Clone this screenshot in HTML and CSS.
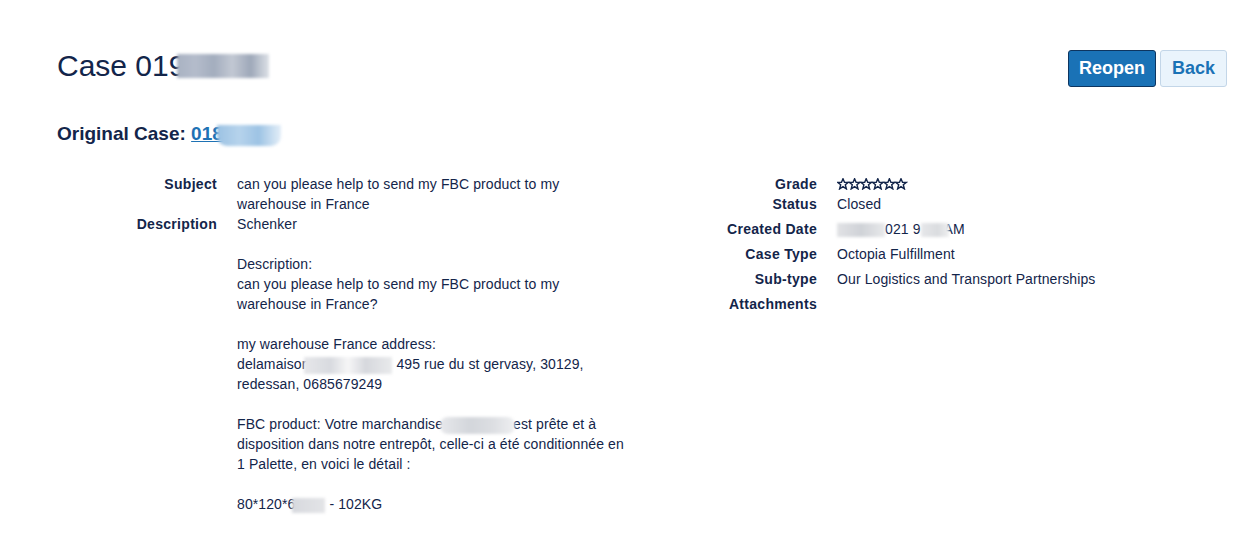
FILE: index.html
```html
<!DOCTYPE html>
<html lang="en">
<head>
    <meta charset="UTF-8">
    <meta name="viewport" content="width=device-width, initial-scale=1.0">
    <title>Case Detail</title>
    <link rel="stylesheet" href="styles.css">
</head>
<body>
    <div class="page">
        <div class="header">
            <h1>Case 019<span class="blur blur-title"></span></h1>
            <div class="actions">
                <button class="btn btn-primary">Reopen</button>
                <button class="btn btn-secondary">Back</button>
            </div>
        </div>

        <h2>Original Case: <a href="#">018<span class="blur blur-link"></span></a></h2>

        <div class="details">
            <div class="section">
                <div class="row">
                    <div class="label">Subject</div>
                    <div class="value">can you please help to send my FBC product to my<br>warehouse in France</div>
                </div>
                <div class="row">
                    <div class="label">Description</div>
                    <div class="value">
                        Schenker<br>
                        <br>
                        Description:<br>
                        can you please help to send my FBC product to my<br>
                        warehouse in France?<br>
                        <br>
                        my warehouse France address:<br>
                        delamaisor<span class="blur blur-addr"></span> 495 rue du st gervasy, 30129,<br>
                        redessan, 0685679249<br>
                        <br>
                        FBC product: Votre marchandise<span class="blur blur-goods"></span>est prête et à<br>
                        disposition dans notre entrepôt, celle-ci a été conditionnée en<br>
                        1 Palette, en voici le détail :<br>
                        <br>
                        80*120*6<span class="blur blur-size"></span> - 102KG
                    </div>
                </div>
            </div>

            <div class="section">
                <div class="row row-tight">
                    <div class="label">Grade</div>
                    <div class="value">
                        <svg class="stars" width="71" height="12" viewBox="0 0 71 12">
                            <defs>
                                <polygon id="star" points="6,0.7 7.5,4.3 11.3,4.4 8.3,6.8 9.4,10.9 6,8.6 2.6,10.9 3.7,6.8 0.7,4.4 4.5,4.3" fill="none" stroke="#13254a" stroke-width="1.4" stroke-linejoin="miter"/>
                            </defs>
                            <use href="#star" x="0"/>
                            <use href="#star" x="11.6"/>
                            <use href="#star" x="23.2"/>
                            <use href="#star" x="34.8"/>
                            <use href="#star" x="46.4"/>
                            <use href="#star" x="58"/>
                        </svg>
                    </div>
                </div>
                <div class="row">
                    <div class="label">Status</div>
                    <div class="value">Closed</div>
                </div>
                <div class="row">
                    <div class="label">Created Date</div>
                    <div class="value"><span class="blur blur-date1"></span>021 9<span class="blur blur-date2"></span>AM</div>
                </div>
                <div class="row">
                    <div class="label">Case Type</div>
                    <div class="value">Octopia Fulfillment</div>
                </div>
                <div class="row">
                    <div class="label">Sub-type</div>
                    <div class="value">Our Logistics and Transport Partnerships</div>
                </div>
                <div class="row">
                    <div class="label">Attachments</div>
                    <div class="value"></div>
                </div>
            </div>
        </div>
    </div>
</body>
</html>
```

FILE: styles.css
```css
body {
    font-family: "Liberation Sans", Arial, sans-serif;
    color: #13254a;
    margin: 0;
    background: #fff;
}
.page {
    padding: 49px 11px 20px 57px;
}
.header {
    display: flex;
    justify-content: space-between;
    align-items: flex-start;
}
h1 {
    margin: 0;
    font-size: 30px;
    font-weight: normal;
    line-height: 34px;
}
.actions {
    display: flex;
    gap: 4px;
    margin-top: 1px;
}
.btn {
    font-family: "Liberation Sans", Arial, sans-serif;
    font-size: 18px;
    font-weight: bold;
    height: 37px;
    padding: 0 11px;
    border-radius: 3px;
    cursor: pointer;
}
.btn-primary {
    background-color: #1a72b6;
    border: 1px solid #0d3560;
    color: #fff;
    padding: 0 10px;
}
.btn-secondary {
    background-color: #eaf4fc;
    border: 1px solid #c3d6e8;
    color: #1a72b6;
}
h2 {
    margin: 36px 0 0;
    font-size: 19px;
    line-height: 21px;
    font-weight: bold;
}
h2 a {
    color: #1e72b4;
    text-decoration: underline;
}
.details {
    display: grid;
    grid-template-columns: 600px 1fr;
    margin-top: 28px;
    font-size: 14px;
    line-height: 20px;
    letter-spacing: 0.1px;
}
.row {
    display: grid;
    grid-template-columns: 160px 1fr;
    column-gap: 20px;
}
.section .row + .row {
    margin-top: 5px;
}
.section .row-tight + .row,
.section:first-child .row + .row {
    margin-top: 0;
}
.label {
    text-align: right;
    font-weight: bold;
    letter-spacing: 0.3px;
}
.value {
    white-space: nowrap;
}
.stars {
    vertical-align: -1px;
}
.blur {
    display: inline-block;
    filter: blur(1.5px);
    vertical-align: middle;
}
.blur-title {
    width: 92px;
    height: 24px;
    margin-left: -8px;
    vertical-align: -2px;
    background: linear-gradient(90deg, #a9b2c2 0, #b4bccb 20%, #a3adbe 40%, #c2c8d3 60%, #9ea8b9 80%, #dde1e7 100%);
}
.blur-link {
    width: 64px;
    height: 21px;
    margin-left: -6px;
    vertical-align: -6px;
    border-radius: 0 0 10px 10px;
    background: linear-gradient(90deg, #9cc2e3 0, #b6d3ec 35%, #9dc3e4 65%, #e3eef8 100%);
}
.blur-addr {
    width: 88px;
    height: 17px;
    margin-left: -2px;
    background: linear-gradient(90deg, #e6e7ea 0, #d8dadf 30%, #f6f6f7 50%, #d6d8dd 70%, #e9eaec 100%);
}
.blur-goods {
    width: 75px;
    height: 17px;
    margin-left: -3px;
    margin-right: -2px;
    border-radius: 8px;
    background: linear-gradient(90deg, #e7e8eb 0, #d3d6db 40%, #dcdee2 70%, #eeeff1 100%);
}
.blur-size {
    width: 33px;
    height: 15px;
    margin-left: -3px;
    background: linear-gradient(90deg, #d7d9de 0, #e3e4e7 100%);
}
.blur-date1 {
    width: 48px;
    height: 14px;
    background: linear-gradient(90deg, #e1e2e5 0, #cfd2d7 50%, #e8e9eb 100%);
}
.blur-date2 {
    width: 28px;
    height: 14px;
    margin-right: -5px;
    background: linear-gradient(90deg, #e6e7ea 0, #dadcdf 60%, #eeeff0 100%);
}
```
